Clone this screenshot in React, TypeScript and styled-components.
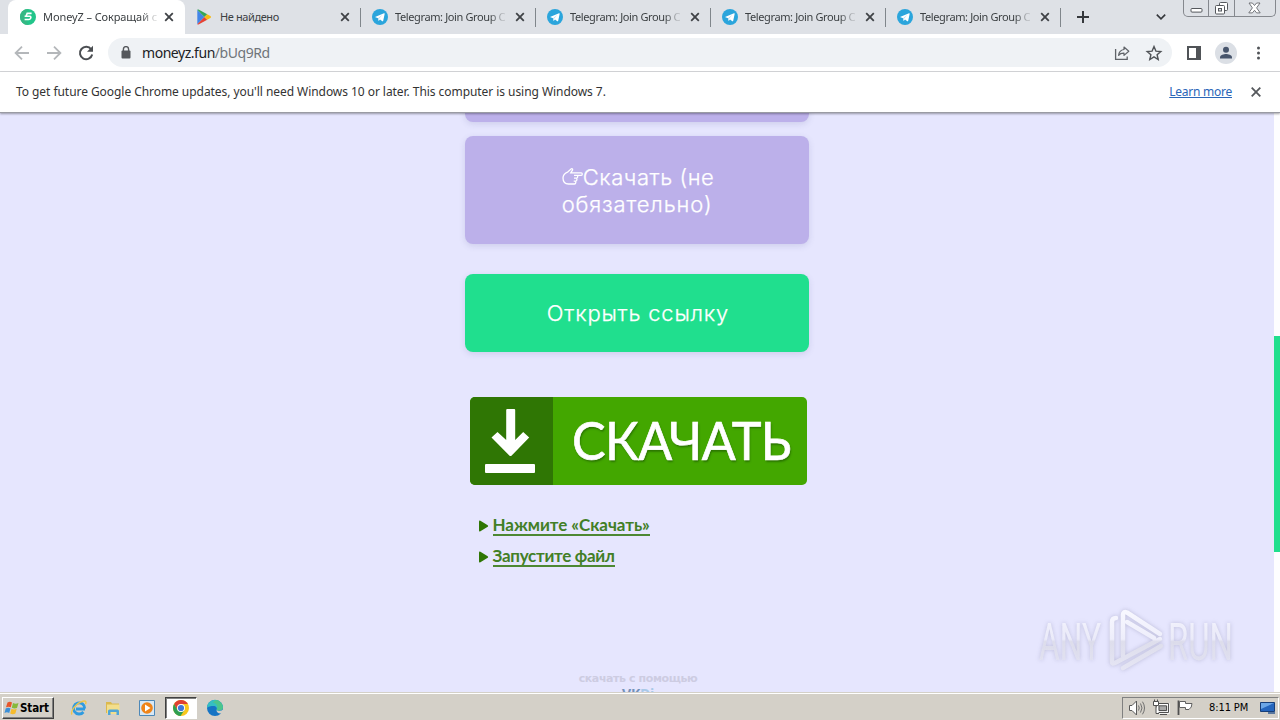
import styled, { createGlobalStyle, css } from "styled-components";

const GlobalStyle = createGlobalStyle`
  * {
    box-sizing: border-box;
  }
  body {
    margin: 0;
    overflow: hidden;
    font-family: "Noto Sans", "Open Sans", sans-serif;
  }
`;

const Screen = styled.div`
  position: relative;
  display: flex;
  flex-direction: column;
  width: 1280px;
  height: 720px;
  overflow: hidden;
  background-color: #fff;
`;

const TabStrip = styled.div`
  display: flex;
  align-items: stretch;
  height: 34px;
  padding-left: 10px;
  background-color: #dee1e6;
`;

const Tab = styled.div<{ $active?: boolean; $line?: boolean }>`
  position: relative;
  display: flex;
  align-items: center;
  width: 175px;
  padding-left: ${({ $active }) => ($active ? 10 : 12)}px;
  padding-right: ${({ $active }) => ($active ? 9 : 8)}px;
  color: #3c4043;
  ${({ $active }) =>
    $active &&
    css`
      background-color: #fff;
      border-radius: 8px 8px 0 0;
      box-shadow: -2px 0 0 #fff;
    `}
  ${({ $line }) =>
    $line &&
    css`
      &::after {
        content: "";
        position: absolute;
        right: -1px;
        top: 8px;
        width: 1px;
        height: 19px;
        background-color: #80868b;
      }
    `}
`;

const TabTitle = styled.span<{ $spacing: number; $fade?: boolean }>`
  flex: none;
  margin-left: 7px;
  white-space: nowrap;
  font-size: 11px;
  line-height: 16px;
  letter-spacing: ${({ $spacing }) => $spacing}px;
  ${({ $fade }) =>
    $fade &&
    css`
      mask-image: linear-gradient(90deg, #000 86%, rgba(0, 0, 0, 0.2) 98%);
    `}
`;

const TabClose = styled.svg`
  flex: none;
  width: 10px;
  height: 10px;
  margin-left: auto;
  margin-right: 2px;
`;

const Favicon = styled.svg`
  flex: none;
  width: 16px;
  height: 16px;
`;

const StripActions = styled.div`
  display: flex;
  flex: 1;
  justify-content: space-between;
  align-items: center;
  padding-left: 17px;
  padding-right: 17px;
`;

const WindowButtons = styled.div`
  display: flex;
  flex: none;
  width: 93px;
  height: 17px;
  margin-right: 4px;
  border: 1px solid #85888e;
  border-top: none;
  border-radius: 0 0 5px 5px;
`;

const WindowButton = styled.div<{ $width: number }>`
  display: flex;
  justify-content: center;
  align-items: center;
  width: ${({ $width }) => $width}px;
  & + & {
    border-left: 1px solid #85888e;
  }
`;

const Toolbar = styled.div`
  display: flex;
  align-items: center;
  height: 38px;
  padding-left: 12px;
  padding-right: 12px;
  border-bottom: 1px solid #d5d7da;
`;

const NavIcon = styled.svg`
  flex: none;
  width: 20px;
  height: 20px;
  margin-right: 12px;
`;

const AddressBar = styled.div`
  display: flex;
  align-items: center;
  flex: 1;
  height: 29px;
  margin-right: 12px;
  padding-left: 12px;
  padding-right: 9px;
  border-radius: 15px;
  background-color: #eff2f5;
`;

const Address = styled.div`
  flex: 1;
  margin-left: 9px;
  color: #202124;
  font-size: 14px;
  line-height: 20px;
  letter-spacing: -0.46px;
  span {
    color: #70757a;
  }
`;

const BarIcon = styled.svg<{ $gap?: number }>`
  flex: none;
  width: 18px;
  height: 18px;
  margin-left: ${({ $gap = 0 }) => $gap}px;
`;

const Avatar = styled.svg`
  flex: none;
  width: 22px;
  height: 22px;
  margin-left: 12px;
`;

const Infobar = styled.div`
  position: relative;
  z-index: 1;
  display: flex;
  align-items: center;
  height: 41px;
  padding: 0 19px 1px 16px;
  background-color: #fff;
  border-bottom: 1px solid #9a9ba3;
  box-shadow: 0 1px 2px rgba(0, 0, 0, 0.35);
  color: #333;
  font-size: 12px;
  line-height: 16px;
  white-space: nowrap;
`;

const InfoText = styled.span`
  flex: 1;
  letter-spacing: -0.055px;
`;

const LearnMore = styled.a`
  margin-right: 19px;
  color: #2a66b8;
  letter-spacing: -0.25px;
  text-decoration: underline;
`;

const Page = styled.main`
  display: flex;
  height: 579px;
  background-color: #e6e6fe;
`;

const Content = styled.div`
  display: flex;
  flex: 1;
  flex-direction: column;
  align-items: center;
  overflow: hidden;
`;

const Scrollbar = styled.div`
  width: 6px;
  padding-top: 223px;
  background-color: #fdfdff;
`;

const Thumb = styled.div`
  height: 216px;
  background-color: #20df8e;
`;

const LinkButton = styled.a<{ $color: string; $height: number; $top?: number }>`
  display: flex;
  flex: none;
  justify-content: center;
  align-items: center;
  width: 344px;
  height: ${({ $height }) => $height}px;
  margin-top: ${({ $top = 0 }) => $top}px;
  padding: 0 79px 0 81px;
  border-radius: 8px;
  background-color: ${({ $color }) => $color};
  box-shadow: 0 2px 6px rgba(80, 80, 140, 0.16);
  color: #fff;
  font-family: Inter, "Noto Sans", sans-serif;
  font-size: 22px;
  font-weight: 300;
  line-height: 27px;
  white-space: nowrap;
  -webkit-text-stroke: 0.25px #fff;
`;

const ButtonText = styled.span<{ $spacing: number }>`
  letter-spacing: ${({ $spacing }) => $spacing}px;
`;

const ButtonLines = styled.div`
  display: flex;
  flex-direction: column;
  align-items: flex-start;
  padding-top: 1px;
`;

const ButtonLine = styled.div`
  display: flex;
  align-items: center;
`;

const Hand = styled.svg`
  width: 21px;
  height: 18px;
`;

const Banner = styled.div`
  display: flex;
  flex: none;
  width: 337px;
  height: 88px;
  margin-top: 45px;
  margin-left: 2px;
  overflow: hidden;
  border-radius: 5px;
  background-color: #43a700;
`;

const BannerIcon = styled.div`
  display: flex;
  justify-content: center;
  width: 83px;
  background-color: #2f7604;
`;

const BannerText = styled.div`
  flex: none;
  margin-left: 19px;
  transform: scaleX(0.95);
  transform-origin: left;
  color: #fff;
  font-family: Lato, "Noto Sans", sans-serif;
  font-size: 53px;
  line-height: 85px;
  letter-spacing: -0.6px;
  text-shadow: 1px 2px 2px rgba(20, 70, 0, 0.5);
  -webkit-text-stroke: 0.7px #fff;
`;

const Steps = styled.div`
  display: flex;
  flex-direction: column;
  gap: 9px;
  width: 319px;
  margin-top: 30px;
`;

const Step = styled.div`
  display: flex;
  align-items: center;
  height: 22px;
`;

const Arrow = styled.svg`
  width: 11px;
  height: 12px;
  margin-right: 4px;
`;

const StepText = styled.span<{ $spacing: number }>`
  height: 20px;
  border-bottom: 2px solid #4d8833;
  color: #427f26;
  font-family: Lato, "Noto Sans", sans-serif;
  font-size: 17px;
  font-weight: 700;
  line-height: 18px;
  letter-spacing: ${({ $spacing }) => $spacing}px;
`;

const Credit = styled.div`
  flex: none;
  margin-top: 105px;
  margin-left: 2px;
  color: #cdcce2;
  font-family: "DejaVu Sans", sans-serif;
  font-size: 11px;
  font-weight: 700;
  line-height: 12px;
  letter-spacing: -0.4px;
`;

const CreditBrand = styled.div`
  flex: none;
  margin-left: 2px;
  color: #7391b8;
  font-family: "Open Sans", sans-serif;
  font-size: 14px;
  font-weight: 700;
  line-height: 18px;
  letter-spacing: -0.3px;
  span {
    color: #a9c9e8;
  }
`;

const Watermark = styled.svg`
  position: absolute;
  left: 1030px;
  top: 600px;
  width: 210px;
  height: 80px;
  filter: drop-shadow(0 0 2px rgba(90, 90, 130, 0.3));
`;

const Taskbar = styled.div`
  display: flex;
  align-items: center;
  height: 28px;
  padding: 2px 1px 0 2px;
  border-top: 1px solid #d4d0c8;
  box-shadow: inset 0 1px 0 #fff;
  background-color: #d4d0c8;
`;

const StartButton = styled.div`
  display: flex;
  align-items: center;
  width: 52px;
  height: 22px;
  padding-left: 1px;
  margin-right: 9px;
  border: 1px solid;
  border-color: #fff #404040 #404040 #fff;
  box-shadow: inset -1px -1px 0 #808080;
  color: #000;
  font-family: "DejaVu Sans Condensed", "DejaVu Sans", sans-serif;
  font-size: 11.5px;
  font-weight: 700;
  line-height: 14px;
  letter-spacing: -0.1px;
`;

const TaskItem = styled.div<{ $active?: boolean }>`
  display: flex;
  justify-content: center;
  align-items: center;
  width: 32px;
  height: 22px;
  margin-right: 2px;
  ${({ $active }) =>
    $active &&
    css`
      background-color: #fff;
      border: 1px solid;
      border-color: #404040 #fff #fff #404040;
      box-shadow: inset 1px 1px 0 #808080;
    `}
`;

const TaskIcon = styled.svg`
  width: 18px;
  height: 18px;
`;

const Tray = styled.div`
  display: flex;
  align-items: center;
  width: 157px;
  height: 22px;
  margin-left: auto;
  padding-left: 5px;
  border: 1px solid;
  border-color: #808080 #fff #fff #808080;
`;

const TrayIcon = styled.svg`
  width: 18px;
  height: 18px;
  margin-right: 6px;
`;

const Clock = styled.span`
  width: 50px;
  margin-left: 9px;
  color: #000;
  font-family: "DejaVu Sans Condensed", "DejaVu Sans", sans-serif;
  font-size: 11px;
  line-height: 14px;
  letter-spacing: -0.1px;
  white-space: nowrap;
`;

const Close = ({ color = "#3f4246" }: { color?: string }) => (
  <TabClose viewBox="0 0 10 10">
    <path d="M1.2 1.2l7.6 7.6M8.8 1.2L1.2 8.8" stroke={color} strokeWidth="1.8" />
  </TabClose>
);

const MoneyIcon = () => (
  <Favicon viewBox="0 0 16 16">
    <circle cx="8" cy="8" r="8" fill="#22c58a" />
    <path d="M0 8a8 8 0 0 1 8-8l-3 8 3 8a8 8 0 0 1-8-8z" fill="#35b884" />
    <path
      d="M11.6 4.4H7.2L6 7.2h3.6c1.4 0 1.6 1.4.8 2.4-.5.7-1 .9-2 .9H4.6M4.6 7.2h3"
      fill="none"
      stroke="#fff"
      strokeWidth="1.6"
    />
  </Favicon>
);

const PlayIcon = () => (
  <Favicon viewBox="0 0 16 16">
    <path d="M.3.8v14.4L7.4 8z" fill="#4285e8" />
    <path d="M.3.8C.8.4 1.4.5 2 .8l8.2 4.5L7.4 8z" fill="#35a557" />
    <path d="M.3 15.2c.5.4 1.1.3 1.7 0l8.2-4.5L7.4 8z" fill="#e54335" />
    <path d="M10.2 5.3l3.2 1.800c.8.5.8 1.300 0 1.800l-3.200 1.800L7.400 8z" fill="#f6bb14" />
  </Favicon>
);

const TelegramIcon = () => (
  <Favicon viewBox="0 0 16 16">
    <circle cx="8" cy="8" r="8" fill="#2ba5dc" />
    <path d="M3 7.9l9-3.7c.5-.2.8.1.7.6l-1.5 7c-.1.5-.5.6-.9.4L8 10.5l-1.4 1.4-.6-2.7z" fill="#fff" />
    <path d="M6 9.2l4.4-3.4-3.6 4.1-.2 2z" fill="#b9dcf0" />
  </Favicon>
);

const telegram = { title: "Telegram: Join Group C", icon: <TelegramIcon />, spacing: -0.38, line: true, fade: true };

const tabs = [
  { title: "MoneyZ – Сокращай с", icon: <MoneyIcon />, spacing: -0.1, active: true, fade: true },
  { title: "Не найдено", icon: <PlayIcon />, spacing: -0.4, line: true },
  telegram,
  telegram,
  telegram,
  telegram,
];

const steps = [
  { text: "Нажмите «Скачать»", spacing: -0.05 },
  { text: "Запустите файл", spacing: -0.3 },
];

function Browser() {
  return (
    <>
      <TabStrip>
        {tabs.map((tab, i) => (
          <Tab key={i} $active={"active" in tab} $line={"line" in tab}>
            {tab.icon}
            <TabTitle $spacing={tab.spacing} $fade={"fade" in tab}>
              {tab.title}
            </TabTitle>
            <Close />
          </Tab>
        ))}
        <StripActions>
          <svg width="12" height="12" viewBox="0 0 12 12">
            <path d="M6 0v12M0 6h12" stroke="#35383c" strokeWidth="2" />
          </svg>
          <svg width="10" height="6" viewBox="0 0 10 6">
            <path d="M.8.6L5 4.8 9.2.6" fill="none" stroke="#35383c" strokeWidth="1.6" />
          </svg>
        </StripActions>
        <WindowButtons>
          <WindowButton $width={25}>
            <svg width="13" height="17" viewBox="0 0 13 17">
              <rect x="1" y="8.5" width="11" height="3.6" rx="1" fill="#fff" stroke="#55585d" />
            </svg>
          </WindowButton>
          <WindowButton $width={26}>
            <svg width="13" height="17" viewBox="0 0 13 17">
              <rect x="4.5" y="2.5" width="8" height="8" rx="1" fill="#fff" stroke="#55585d" />
              <rect x=".5" y="5.5" width="9" height="8.5" rx="1" fill="#fff" stroke="#55585d" />
              <rect x="3.5" y="8.5" width="3" height="2.5" fill="#dee1e6" stroke="#55585d" />
            </svg>
          </WindowButton>
          <WindowButton $width={42}>
            <svg width="13" height="17" viewBox="0 0 13 17">
              <path
                d="M1 3h3.4l2.1 2.5L8.6 3H12L8.6 7.9l3.6 5H8.6l-2.1-2.6-2.1 2.6H.8l3.6-5z"
                fill="#fff"
                stroke="#66696e"
                strokeWidth=".9"
              />
            </svg>
          </WindowButton>
        </WindowButtons>
      </TabStrip>
      <Toolbar>
        <NavIcon viewBox="0 0 20 20">
          <path d="M17 10H4M10 3.6L3.6 10l6.4 6.4" fill="none" stroke="#b4b7ba" strokeWidth="1.8" />
        </NavIcon>
        <NavIcon viewBox="0 0 20 20">
          <path d="M3 10h13M10 3.6l6.4 6.4-6.4 6.4" fill="none" stroke="#b4b7ba" strokeWidth="1.8" />
        </NavIcon>
        <NavIcon viewBox="0 0 20 20">
          <path d="M15.2 6.4A6.2 6.2 0 1 0 16.2 11.5" fill="none" stroke="#4b4e52" strokeWidth="2" />
          <path d="M17 2.8v6h-6z" fill="#4b4e52" />
        </NavIcon>
        <AddressBar>
          <svg width="13" height="14" viewBox="0 0 13 14">
            <rect x="1.5" y="4.5" width="9" height="8" rx="1" fill="#55585c" />
            <path d="M3.4 5V3.200a2.600 2.600 0 0 1 5.200 0V5" fill="none" stroke="#55585c" strokeWidth="1.4" />
          </svg>
          <Address>
            moneyz.fun<span>/bUq9Rd</span>
          </Address>
          <BarIcon viewBox="0 0 18 18">
            <path d="M2.6 5v10.4h11.6v-3" fill="none" stroke="#5f6368" strokeWidth="1.3" />
            <path
              d="M11 3l4.8 4.2L11 11.4V9.2c-2.8-.1-4.2.6-5.4 2.1.3-3 2-5.3 5.4-5.8z"
              fill="none"
              stroke="#5f6368"
              strokeWidth="1.2"
              strokeLinejoin="round"
            />
          </BarIcon>
          <BarIcon $gap={14} viewBox="0 0 18 18">
            <path
              d="M9 2.6l1.9 4.5 4.9.4-3.7 3.2 1.1 4.8L9 12.9l-4.2 2.6 1.1-4.8-3.7-3.2 4.9-.4z"
              fill="none"
              stroke="#505357"
              strokeWidth="1.4"
            />
          </BarIcon>
        </AddressBar>
        <BarIcon $gap={1} viewBox="0 0 18 18">
          <path d="M2 2h14v14H2zM4 4v10h7V4z" fill="#505357" fillRule="evenodd" />
        </BarIcon>
        <Avatar viewBox="0 0 22 22">
          <circle cx="11" cy="11" r="11" fill="#dbdfe5" />
          <circle cx="11" cy="7.8" r="3" fill="#47556c" />
          <path d="M5 16.5v-1.3c0-2.2 4-3.2 6-3.2s6 1 6 3.2v1.3z" fill="#47556c" />
        </Avatar>
        <BarIcon $gap={13} viewBox="0 0 18 18">
          <circle cx="8.5" cy="4" r="1.5" fill="#505357" />
          <circle cx="8.5" cy="9" r="1.5" fill="#505357" />
          <circle cx="8.5" cy="14" r="1.5" fill="#505357" />
        </BarIcon>
      </Toolbar>
      <Infobar>
        <InfoText>
          To get future Google Chrome updates, you'll need Windows 10 or later. This computer is using Windows 7.
        </InfoText>
        <LearnMore>Learn more</LearnMore>
        <svg width="10" height="10" viewBox="0 0 10 10">
          <path d="M.7.7l8.6 8.6M9.3.7L.7 9.3" stroke="#55585c" strokeWidth="1.8" />
        </svg>
      </Infobar>
    </>
  );
}

function DownloadPage() {
  return (
    <Page>
      <Content>
        <LinkButton $color="#bcb0ea" $height={78} $top={-69} />
        <LinkButton $color="#bcb0ea" $height={108} $top={14}>
          <ButtonLines>
            <ButtonLine>
              <Hand viewBox="0 0 21 18">
                <path
                  d="M1 10c0-3.5 2.5-5.2 5-6.2L9.3.8c1.2-.4 1.7.8 1 1.7L8.8 4.8h10.5c1.3 0 1.3 2.5 0 2.5h-6.5M12 7.3h2.6c1.5 0 1.5 2.9-.1 2.9H12M14 10.2c1.3.2 1.2 2.9-.3 2.9h-2M13 13.1c1.2.3 1 2.9-.5 2.9H6.5C3 16 1 14 1 10"
                  fill="none"
                  stroke="#fff"
                  strokeWidth="1.3"
                />
              </Hand>
              <ButtonText $spacing={0.55}>Скачать (не</ButtonText>
            </ButtonLine>
            <ButtonText $spacing={0.85}>обязательно)</ButtonText>
          </ButtonLines>
        </LinkButton>
        <LinkButton $color="#20df8e" $height={78} $top={30}>
          <ButtonText $spacing={0.8}>Открыть ссылку</ButtonText>
        </LinkButton>
        <Banner>
          <BannerIcon>
            <svg width="83" height="88" viewBox="0 0 83 88">
              <path
                d="M36.200 13q0-1 1-1h7q1 0 1 1v30l8-8 6 5.500-17.500 18q-1.200 1.200-2.400 0L21.500 40.500l6-5.500 8.700 8z"
                fill="#fff"
              />
              <rect x="15" y="67" width="50" height="9" rx="1" fill="#fff" />
            </svg>
          </BannerIcon>
          <BannerText>СКАЧАТЬ</BannerText>
        </Banner>
        <Steps>
          {steps.map((step) => (
            <Step key={step.text}>
              <Arrow viewBox="0 0 11 12">
                <path d="M1 1.500Q1 0 2.400.7l7.300 4.500q1 .8 0 1.600l-7.300 4.500Q1 12 1 10.500z" fill="#2f7604" />
              </Arrow>
              <StepText $spacing={step.spacing}>{step.text}</StepText>
            </Step>
          ))}
        </Steps>
        <Credit>скачать с помощью</Credit>
        <CreditBrand>
          VK<span>Di</span>
        </CreditBrand>
      </Content>
      <Scrollbar>
        <Thumb />
      </Scrollbar>
    </Page>
  );
}

function AnyRunMark() {
  return (
    <Watermark viewBox="0 0 210 80">
      <defs>
        <linearGradient id="shine" x1="0" y1="10" x2="0" y2="72" gradientUnits="userSpaceOnUse">
          <stop offset="0" stopColor="#f8f8ff" />
          <stop offset=".47" stopColor="#eeeefb" />
          <stop offset=".51" stopColor="#dedeec" />
          <stop offset="1" stopColor="#e6e6f5" />
        </linearGradient>
      </defs>
      <g fill="url(#shine)" fontFamily="Roboto, sans-serif" fontSize="51" opacity=".9">
        <text x="9" y="60" textLength="62" lengthAdjust="spacingAndGlyphs">
          ANY
        </text>
        <text x="138" y="60" textLength="65" lengthAdjust="spacingAndGlyphs">
          RUN
        </text>
      </g>
      <g fill="none" stroke="url(#shine)" strokeWidth="4.5" strokeLinecap="round" strokeLinejoin="round">
        <path d="M86 18q-4 0-4 4v40q0 2.500 3 1l45-24" />
        <path d="M93 56V15q0-4 4-2.500L130 34" />
        <path d="M93 68l38-22M97 22l27 16" />
      </g>
    </Watermark>
  );
}

function Desktop() {
  return (
    <Taskbar>
      <StartButton>
        <svg width="16" height="16" viewBox="0 0 16 16">
          <path d="M3.5 2.5Q6 1 8 2.5L6.8 7.3Q4.5 6 2 7.3z" fill="#e8562a" />
          <path d="M9 3q2.5 1.3 5.5 0L13 8Q10.3 9 7.8 7.7z" fill="#86b93a" />
          <path d="M1.7 8.4q2.5-1.3 4.8 0L5.2 13Q3 11.7.5 13z" fill="#3b8fd8" />
          <path d="M7.5 8.8q2.5 1.3 5.2 0L11.4 13.6q-2.7 1.2-5.2 0z" fill="#f6bb2c" />
        </svg>
        Start
      </StartButton>
      <TaskItem>
        <TaskIcon viewBox="0 0 18 18">
          <path d="M15 10H6M14.7 9.5A5.6 5.6 0 1 0 13.4 13" fill="none" stroke="#2f9be0" strokeWidth="2.8" />
          <path d="M2 15.5C0 12.5 6 4 13 2.2c3-.7 3.5 1 2.5 3" fill="none" stroke="#efc64a" strokeWidth="1.4" />
        </TaskIcon>
      </TaskItem>
      <TaskItem>
        <TaskIcon viewBox="0 0 18 18">
          <path d="M2 3h5l1 1.5h7V14H2z" fill="#dcb94e" />
          <path d="M3 5.5h12.5V15H3z" fill="#f3de8c" />
          <path d="M4 16v-4q0-1.500 1.500-1.500h8q1.500 0 1.500 1.500v4h-2.500v-3h-6v3z" fill="#4fa5d6" />
        </TaskIcon>
      </TaskItem>
      <TaskItem>
        <TaskIcon viewBox="0 0 18 18">
          <path d="M1.5 1.5h15v15h-15z" fill="#d8e8f5" stroke="#4d88b8" />
          <circle cx="9" cy="9" r="5.8" fill="#f08418" />
          <path d="M7 5.5l5.5 3.5L7 12.5z" fill="#fff" />
        </TaskIcon>
      </TaskItem>
      <TaskItem $active>
        <TaskIcon viewBox="0 0 18 18">
          <circle cx="9" cy="9" r="8" fill="#f8c71d" />
          <path d="M2.1 5A8 8 0 0 1 15.9 5H9L5.5 11z" fill="#df4032" />
          <path d="M2.1 5A8 8 0 0 0 8.5 17l4-6H5.5z" fill="#2f9f52" />
          <circle cx="9" cy="9" r="4" fill="#fff" />
          <circle cx="9" cy="9" r="3.1" fill="#3f78d8" />
        </TaskIcon>
      </TaskItem>
      <TaskItem>
        <TaskIcon viewBox="0 0 18 18">
          <circle cx="9" cy="9" r="8" fill="#1674c4" />
          <path d="M1 9a8 8 0 0 1 16-.5c0 3-4 4-6.5 2.5 1-2-.5-4-3-4S2 7.5 1 9z" fill="#35bfc2" />
          <path d="M10 1.1A8 8 0 0 1 17 9c-.5 2.5-4.5 3-6.5 2 2-3 .5-7-4-7.5z" fill="#57c775" fillOpacity=".7" />
          <path d="M10.5 11c2 1.5 5 1 6.800-.5l.7 3-2.500 1c-3 .5-5-1-5-3.500z" fill="#d4d0c8" />
        </TaskIcon>
      </TaskItem>
      <Tray>
        <TrayIcon viewBox="0 0 18 18">
          <path d="M1.5 6.5H4L8.5 2v14L4 11.5H1.5z" fill="#fff" stroke="#5a5a5a" />
          <path d="M10.5 6.5q1.5 2.5 0 5M12.5 4.5q3 4.5 0 9M14.5 2.7q4 6.3 0 12.6" fill="none" stroke="#707070" />
        </TrayIcon>
        <TrayIcon viewBox="0 0 18 18">
          <path d="M5.5 5.5h11v8h-11z" fill="#a9a9a9" stroke="#fff" strokeWidth="2.4" />
          <path d="M4.5 4.5h12v9h-12zM7 6.8h7.5v4.7H7zM8 15.5h7" fill="none" stroke="#505050" />
          <path d="M1.5 2.5h5v4h-5zM2.5.5v2M5.5.5v2M4 6.5v8h3" fill="#fff" stroke="#505050" />
        </TrayIcon>
        <TrayIcon viewBox="0 0 18 18">
          <path d="M2.5 1.5v14.5" stroke="#505050" strokeWidth="1.8" />
          <path d="M3.5 2.5h6v2h6.5q0 4-3 6h-3.500v-2h-6z" fill="#fff" stroke="#606060" />
        </TrayIcon>
        <Clock>8:11 PM</Clock>
        <svg width="18" height="16" viewBox="0 0 18 16">
          <path d="M1.5 2.5h14v9h-14z" fill="#2465bd" stroke="#173e78" />
          <path d="M2 3h13L2 9z" fill="#6ba6e6" />
          <path d="M9 13h7" stroke="#305a92" strokeWidth="1.5" />
        </svg>
      </Tray>
    </Taskbar>
  );
}

function App() {
  return (
    <Screen>
      <GlobalStyle />
      <Browser />
      <DownloadPage />
      <AnyRunMark />
      <Desktop />
    </Screen>
  );
}

export default App;
